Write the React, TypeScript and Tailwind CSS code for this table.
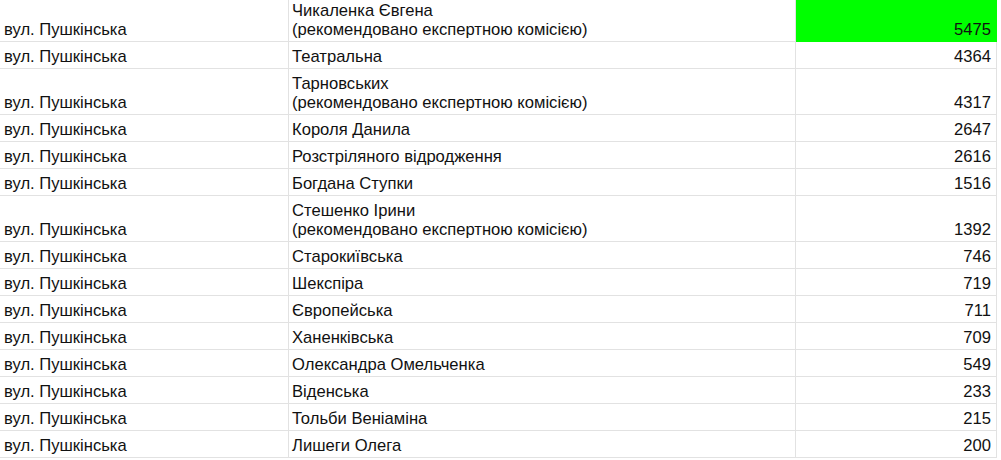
import React from "react";

type Row = { street: string; name: string; note?: boolean; votes: number; h: string; hl?: boolean };

const rows: Row[] = [
  { street: "вул. Пушкінська", name: "Чикаленка Євгена", note: true, votes: 5475, h: "h-[42px]", hl: true },
  { street: "вул. Пушкінська", name: "Театральна", votes: 4364, h: "h-[27px]" },
  { street: "вул. Пушкінська", name: "Тарновських", note: true, votes: 4317, h: "h-[46px]" },
  { street: "вул. Пушкінська", name: "Короля Данила", votes: 2647, h: "h-[27px]" },
  { street: "вул. Пушкінська", name: "Розстріляного відродження", votes: 2616, h: "h-[27px]" },
  { street: "вул. Пушкінська", name: "Богдана Ступки", votes: 1516, h: "h-[27px]" },
  { street: "вул. Пушкінська", name: "Стешенко Ірини", note: true, votes: 1392, h: "h-[46px]" },
  { street: "вул. Пушкінська", name: "Старокиївська", votes: 746, h: "h-[27px]" },
  { street: "вул. Пушкінська", name: "Шекспіра", votes: 719, h: "h-[27px]" },
  { street: "вул. Пушкінська", name: "Європейська", votes: 711, h: "h-[27px]" },
  { street: "вул. Пушкінська", name: "Ханенківська", votes: 709, h: "h-[27px]" },
  { street: "вул. Пушкінська", name: "Олександра Омельченка", votes: 549, h: "h-[27px]" },
  { street: "вул. Пушкінська", name: "Віденська", votes: 233, h: "h-[27px]" },
  { street: "вул. Пушкінська", name: "Тольби Веніаміна", votes: 215, h: "h-[27px]" },
  { street: "вул. Пушкінська", name: "Лишеги Олега", votes: 200, h: "h-[27px]" },
];

export default function App() {
  return (
    <div className="w-[1001px] h-[460px] overflow-hidden bg-white text-[16.6px] leading-[19px] text-[#111] font-['Liberation_Sans',Arial,sans-serif]">
      {rows.map((r, i) => (
        <div key={i} className={`flex ${r.h}`}>
          <div className="w-[289px] flex items-end pl-[4px] pb-[2px] border-r border-b border-[#e2e2e2] whitespace-nowrap">
            {r.street}
          </div>
          <div className="w-[507px] flex flex-col justify-end pl-[3px] pb-[2px] border-r border-b border-[#e2e2e2] whitespace-nowrap">
            <span>{r.name}</span>
            {r.note && <span>(рекомендовано експертною комісією)</span>}
          </div>
          <div
            className={`w-[201px] flex items-end justify-end pr-[5px] pb-[2px] border-r border-b ${
              r.hl ? "bg-[#00ff00] border-[#00ff00]" : "border-[#e2e2e2]"
            }`}
          >
            {r.votes}
          </div>
        </div>
      ))}
    </div>
  );
}
